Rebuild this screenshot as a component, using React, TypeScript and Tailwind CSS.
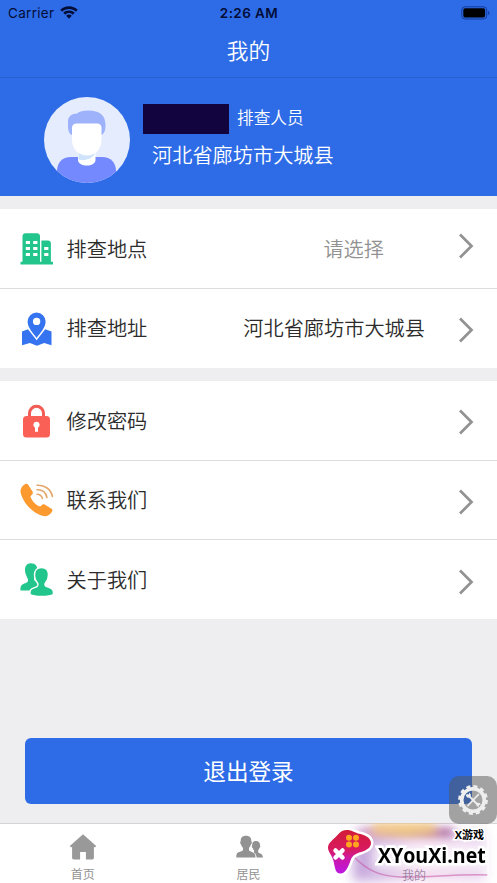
import React from "react";
import clsx from "clsx";

const Wifi = () => (
  <svg width="18" height="14" viewBox="0 0 18 14" fill="#030d38">
    <path d="M9 .3C5.6.3 2.5 1.6.3 3.800l1.800 1.900C4 3.900 6.400 2.900 9 2.900s5 1 6.900 2.800l1.800-1.900C15.500 1.600 12.400.3 9 .3Z" />
    <path d="M9 4.500c-2.200 0-4.200.9-5.700 2.300l1.900 1.900C6.200 7.700 7.500 7.100 9 7.100s2.800.6 3.800 1.600l1.900-1.900C13.200 5.400 11.200 4.500 9 4.500Z" />
    <path d="M9 8.600c-1.100 0-2.100.4-2.800 1.100L9 12.800l2.800-3.100C11.100 9 10.100 8.600 9 8.600Z" />
  </svg>
);

const Battery = () => (
  <svg width="29" height="14" viewBox="0 0 29 14">
    <rect x=".8" y=".8" width="24.900" height="12.200" rx="3.200" fill="none" stroke="#153b9c" />
    <rect x="2.300" y="2.300" width="21.800" height="9.200" rx="1.800" fill="#000" />
    <path d="M27.200 5v4c.9-.4 1.300-1.100 1.300-2s-.4-1.600-1.300-2Z" fill="#153b9c" />
  </svg>
);

const Avatar = () => (
  <svg width="86" height="86" viewBox="0 0 86 86" className="shrink-0">
    <defs>
      <clipPath id="face-clip">
        <circle cx="43" cy="43" r="43" />
      </clipPath>
    </defs>
    <g clipPath="url(#face-clip)">
      <rect width="86" height="86" fill="#e5ecfe" />
      <path d="M13 86V74c0-8 5-14 14-14h31c9 0 14 6 14 14v12Z" fill="#7589fe" />
      <path d="M34 56h17.500v7c0 3.500-4 5.500-8.700 5.500S34 66.500 34 63Z" fill="#fff" />
      <path d="M34.500 54h16v4c-5 5-11 6-16 4.500Z" fill="#cfe3fb" />
      <path d="M28 38c-2.500-1-4-4-4-8v-6c0-4.500 4-7.500 9-7.500 3-2.300 6-3 11-3 12 0 17.500 5 17.500 14.500 0 5-1 8.500-4 10Z" fill="#9db2fb" />
      <path d="M28 31c0-3 1.500-4.500 5-4.500h20c3 0 4.500 1.500 4.500 4.500v12c0 9-6 15.500-14.500 15.500S28 52 28 43Z" fill="#fff" />
    </g>
  </svg>
);

const BuildingIcon = () => (
  <svg width="34" height="34" viewBox="0 0 34 34">
    <path d="M.5 29.800h2V4.500C2.500 2.500 3.700 1.300 5.500 1.300h11.500c1.800 0 3 1.200 3 3.200v25.300h1.400V8.500h6.600c1.800 0 2.900 1.200 2.900 3v18.300H33V32.500H.5Z" fill="#22c58c" />
    <path d="M5.800 9h4.200v3H5.800Zm7.400 0h4.200v3h-4.200ZM5.800 15h4.200v3H5.800Zm7.400 0h4.200v3h-4.200ZM5.800 21h4.200v3H5.800Zm7.400 0h4.200v3h-4.200Zm11-6h4.200v3h-4.200Zm0 6h4.200v3h-4.200Z" fill="#fff" />
  </svg>
);

const MapIcon = () => (
  <svg width="34" height="34" viewBox="0 0 34 34">
    <path d="m2 19.500 6-2.300 8.600 11 8.600-11 6.300 2.300v13.800l-7.300-2.300-7.300 2.800-7-2.800L2 33.300Z" fill="#3573f0" />
    <path fillRule="evenodd" d="M16.600.5a9 9 0 0 0-9 9c0 6 5.500 11.500 9 16.500 3.500-5 9-10.500 9-16.500a9 9 0 0 0-9-9Zm0 5.200a3.700 3.700 0 1 1 0 7.400 3.700 3.700 0 0 1 0-7.400Z" fill="#3573f0" />
  </svg>
);

const LockIcon = () => (
  <svg width="34" height="34" viewBox="0 0 34 34">
    <path d="M9.500 14V9.300a7 7 0 0 1 14 0V14" fill="none" stroke="#f25c54" strokeWidth="3" />
    <rect x="3" y="12" width="27" height="21.500" rx="3.500" fill="#fb6056" />
    <path d="M16.500 17.700a3.200 3.200 0 0 1 1.500 6v4.100h-3v-4.100a3.200 3.200 0 0 1 1.500-6Z" fill="#fff" />
  </svg>
);

const PhoneIcon = () => (
  <svg width="34" height="34" viewBox="0 0 34 34">
    <path d="M5 1.200C6.400.5 7.600.8 8.500 2.200l4 6.400c.8 1.400.3 2.400-.9 3.300-1.500 1.200-1.300 2-.4 3.700 1.700 3.200 4 5.600 7.200 7.300 1.300.7 2 .6 3-.5 1-1.200 2.200-1.500 3.600-.7l6.200 3.800c1.300.8 1.600 2 .7 3.200-2.300 3.600-5.600 5.400-9.500 4.100C12.100 29.500 3.700 20.500.8 10.300-.3 6.600 1.700 2.900 5 1.200Z" fill="#fc992f" />
    <path d="M17 2.300c7.800-.5 14 4 15.400 11.200M17 6.800c5.400-.2 9 3 10 7.700M17 11.300c3 0 4.700 1.600 5.400 4.200" fill="none" stroke="#e5a76c" strokeWidth="1.600" strokeLinecap="round" />
  </svg>
);

const PeopleIcon = () => (
  <svg width="34" height="34" viewBox="0 0 34 34">
    <path d="M11 .2c4.500 0 6.500 3 6.300 6.800 0 3-.9 5.300-2.700 7.300-.9 1-.7 3 .4 3.500l3.700 2v7.700H.5c-.4-3 .2-5.600 2.800-6.500 3-1.200 4.900-1.500 4.700-4 0-1.300-1.700-4-2.400-6.300C4 4.800 5.700.2 11 .2Z" fill="#22c58c" />
    <path d="M21.500 4.500c4.900 0 7.100 3.300 6.900 7.400 0 3-1 5.800-2.800 7.800-1 1.200-.9 3 .5 3.600 2.800 1.100 6 1.300 6.900 4 .4 1.300.5 3 .3 4.300-2.200 1.300-6.700 1.900-11.700 1.900s-9.200-.6-11.500-1.900c-.3-1.600-.1-3.400.5-4.700 1.200-2.200 4.400-2.100 6.300-3.300 1.300-.8 1.400-2.700.4-3.900-1.800-2-2.800-4.800-2.800-7.800 0-4.100 2.100-7.400 7-7.400Z" fill="#22c58c" stroke="#fff" strokeWidth="1.400" />
  </svg>
);

const Arrow = () => (
  <svg width="16" height="28" viewBox="0 0 16 28" className="shrink-0">
    <path d="M2 2.500 13.500 14 2 25.500" fill="none" stroke="#929292" strokeWidth="2.700" />
  </svg>
);

const Row = ({
  icon,
  label,
  value,
  muted,
  high,
  last,
}: {
  icon: React.ReactNode;
  label: string;
  value?: string;
  muted?: boolean;
  high?: boolean;
  last?: boolean;
}) => {
  return (
    <div
      className={clsx(
        "flex items-center bg-white pl-5 pr-[23px] pt-px",
        last ? "h-[79px]" : "h-[79.500px] border-b border-[#dcdcde]"
      )}
    >
      <div className="w-[34px] shrink-0">{icon}</div>
      <span className="ml-[12.500px] flex-1 text-[20.200px] font-[350] text-[#2c2c2c]">{label}</span>
      {value && (
        <span className={clsx("text-[20.200px] font-[350]", muted ? "mr-[74px] text-[#929292]" : "mr-[33px] text-[#2c2c2c]")}>
          {value}
        </span>
      )}
      <div className={clsx(high ? "pb-[6px]" : "pt-[3px]")}>
        <Arrow />
      </div>
    </div>
  );
};

const HomeIcon = () => (
  <svg width="28" height="26" viewBox="0 0 28 26" fill="#999">
    <path d="M14 .2.8 12l1.300 1.500 1-.7v11c0 1 .7 1.700 1.700 1.700h6.300V18h5.800v7.500h6.300c1 0 1.700-.7 1.700-1.700v-11l1 .7 1.300-1.500Z" />
  </svg>
);

const ResidentIcon = () => (
  <svg width="28" height="26" viewBox="0 0 28 26" fill="#929292">
    <path d="M11 1.800c3.700 0 5.500 2.100 5.300 5.500 1 .5.500 3-.6 3.600-.4 1.300-1 2.200-1.700 2.900v2.400c.2 1.300 5.700 1.600 6.200 4.700l.4 2.600H1.300c0-3.200.4-4.600 3-5.400 2.200-.8 3.700-1.200 3.700-2v-2.300c-.8-.7-1.300-1.600-1.700-2.900-1.100-.6-1.600-3.100-.6-3.600C5.500 3.900 7.300 1.800 11 1.800Z" />
    <path d="M21 7c3 0 4.200 2 4 4.500.7.700.1 2.300-.7 2.700-.3.900-.6 1.500-1.100 2v2.200c1.500 1 4.600.9 4.800 5.100h-6.300c-.4-2.500-1.400-4.200-2.700-5v-2.300c-.5-.5-.9-1.100-1.100-2-.9-.4-1.400-2-.7-2.700C17 9 18 7 21 7Z" />
  </svg>
);

const GearButton = () => (
  <div className="absolute right-0 top-[776px] flex h-12 w-12 items-center justify-center rounded-[10px] bg-[#555]/50">
    <svg width="32" height="32" viewBox="0 0 32 32">
      <circle cx="16" cy="16" r="11.300" fill="none" stroke="#eee" strokeWidth="3.600" />
      <circle cx="16" cy="16" r="13.500" fill="none" stroke="#eee" strokeWidth="2.800" strokeDasharray="4.040 3.029" />
      <path d="m12 12 9.500 9.500" stroke="#eee" strokeWidth="1.800" />
      <path d="m21.500 10.500-10.500 11" stroke="#eee" strokeWidth="1.800" strokeLinecap="round" />
      <path d="m9.500 10 2.500.6v-2l2 2.200-.8 2.500-2.600.5-1.600-1.900Zm9.500 11 1-2 2.200-.3 1.900 2-2.200.3-.3 2.200Z" fill="#eee" />
    </svg>
  </div>
);

const Watermark = () => (
  <div className="absolute bottom-0 right-0 h-[60px] w-[174px] overflow-hidden">
    <div className="absolute left-[30px] top-[8px] h-[50px] w-[132px] bg-linear-to-r from-[#b18ad0]/80 via-[#f4daee] to-[#ead5ef] blur-[6px]" />
    <div className="absolute left-[38px] top-[5px] h-[9px] w-[92px] bg-linear-to-r from-[#d9a0c8] via-[#dcae8c] to-[#a862a5] blur-[4px]" />
    <div className="absolute left-[50px] top-[-1px] h-[12px] w-[62px] bg-[#f6cb70]/70 blur-[4px]" />
    <div className="absolute left-[50px] top-[22px] h-[24px] w-[112px] bg-white/70 blur-[5px]" />
    <svg width="174" height="60" viewBox="0 0 174 60" className="absolute inset-0">
      <defs>
        <linearGradient id="pad" x1="0" x2="0" y1="0" y2="1">
          <stop stopColor="#d21b36" />
          <stop offset=".45" stopColor="#d81a61" />
          <stop offset=".65" stopColor="#cc18a4" />
          <stop offset="1" stopColor="#bb17e5" />
        </linearGradient>
      </defs>
      <path d="M31 34c14 14 26 19 46 20 30 1 50-3 88-2" fill="none" stroke="#c2479b" strokeWidth="1.500" opacity=".5" />
      <path d="M148 9c10-3 17 0 17 8v37" fill="none" stroke="#fff" strokeWidth="1.500" opacity=".8" />
      <path
        d="M15 11.500c2-2.500 5-4.500 9-4.500 5 0 7 2.500 12 3.700 6.500 1.300 12 4.300 12 9.300s-5 7.500-10 9c-5 1.500-8.500 3-10.500 8.500C25.500 43 23 50.500 17.500 50.500S12 44 10.500 38 5 29 5 24.500 10 17 15 11.500Z"
        fill="url(#pad)"
        stroke="#fff"
        strokeWidth="5"
        strokeLinejoin="round"
        paintOrder="stroke"
      />
      <path d="m12.500 27.500 7 7m0-7-7 7" stroke="#fff" strokeWidth="4.500" strokeLinecap="round" />
      <g fill="#ffa51e">
        <circle cx="26" cy="14.700" r="3" />
        <circle cx="33" cy="14.700" r="3" />
        <circle cx="26" cy="21.400" r="3" />
        <circle cx="33" cy="21.400" r="3" />
      </g>
    </svg>
    <span className="absolute right-[13px] top-[6px] whitespace-nowrap font-['Open_Sans','Noto_Sans_CJK_SC',sans-serif] text-[11px] font-bold leading-none text-black [paint-order:stroke] [-webkit-text-stroke:3px_white]">
      X游戏
    </span>
    <span className="absolute left-[55px] top-[23px] origin-left scale-x-[.91] whitespace-nowrap font-['Open_Sans',sans-serif] text-[21.500px] font-bold leading-[18px] text-black [paint-order:stroke] [-webkit-text-stroke:5px_white]">
      XYouXi.net
    </span>
  </div>
);

const Tab = ({ icon, label }: { icon: React.ReactNode; label: string }) => (
  <div className="flex flex-1 flex-col items-center pt-[10px] text-[#929292]">
    {icon}
    <span className="mt-[6px] text-[12px] leading-4">{label}</span>
  </div>
);

const App = () => {
  return (
    <div className="relative flex h-[883px] w-[497px] flex-col overflow-hidden bg-[#eeeef0] font-['Noto_Sans_CJK_SC',sans-serif]">
      <div className="h-[77px] bg-[#2d6ce6]">
        <div className="grid h-[26px] grid-cols-3 items-center pl-2 pr-[7px] font-['Inter',sans-serif] text-[#030d38]">
          <div className="flex items-center gap-[6px]">
            <span className="text-[13.500px] tracking-[0.300px]">Carrier</span>
            <Wifi />
          </div>
          <span className="pt-px text-center text-[13.500px] font-semibold tracking-[0.400px]">2:26 AM</span>
          <div className="flex justify-end">
            <Battery />
          </div>
        </div>
        <h1 className="text-center text-[21.700px] font-[350] leading-[48px] text-white">我的</h1>
      </div>

      <div className="flex h-[119px] items-center border-t border-[#2861cf] bg-[#2d6ce6] pl-11 pt-[6px]">
        <Avatar />
        <div className="ml-[13px] pb-[6px] font-[350] text-white">
          <div className="flex items-center">
            <div className="h-[30px] w-[86px] bg-[#12043f]" />
            <span className="ml-2 pb-[5px] text-[16.700px] leading-6">排查人员</span>
          </div>
          <p className="ml-[9px] mt-[6px] text-[20.200px] leading-[30px]">河北省廊坊市大城县</p>
        </div>
      </div>

      <div className="mt-[13px]">
        <Row icon={<BuildingIcon />} label="排查地点" value="请选择" muted high />
        <Row icon={<MapIcon />} label="排查地址" value="河北省廊坊市大城县" last />
      </div>

      <div className="mt-[13.500px]">
        <Row icon={<LockIcon />} label="修改密码" />
        <Row icon={<PhoneIcon />} label="联系我们" />
        <Row icon={<PeopleIcon />} label="关于我们" last />
      </div>

      <button className="mx-[25px] mb-[19px] mt-auto h-[66px] rounded-[6px] bg-[#2d6ce6] text-[22.600px] text-white">
        退出登录
      </button>

      <div className="flex h-[60px] border-t border-[#d4d4d6] bg-white">
        <Tab icon={<HomeIcon />} label="首页" />
        <Tab icon={<ResidentIcon />} label="居民" />
        <div className="flex-1" />
      </div>

      <GearButton />
      <Watermark />
      <span className="absolute bottom-0 left-[402px] text-[12px] leading-4 text-[#7a6288]/70">我的</span>
    </div>
  );
};

export default App;
